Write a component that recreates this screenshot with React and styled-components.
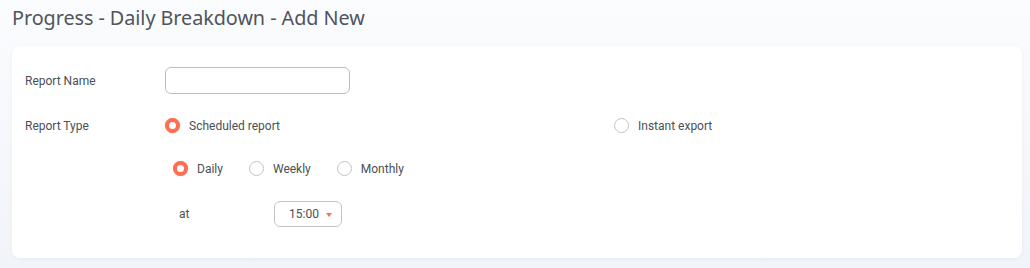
import styled, { createGlobalStyle } from 'styled-components';

const Global = createGlobalStyle`
html, body {
margin: 0;
padding: 0;
}
body {
background: linear-gradient(180deg, #fbfcfe 0%, #f1f4f9 100%);
min-height: 268px;
font-family: Roboto, "Liberation Sans", sans-serif;
color: #4b4f56;
}
`

const Page = styled.div`
padding: 0 8px 10px 12px;
`

const Title = styled.h1`
margin: 0;
height: 46px;
padding-top: 4px;
box-sizing: border-box;
font-family: "Noto Sans", "Open Sans", sans-serif;
font-weight: 400;
font-size: 19.8px;
letter-spacing: -0.05px;
color: #50545c;
line-height: 28px;
`

const Card = styled.div`
background: #fff;
border-radius: 8px;
box-shadow: 0 1px 4px rgba(120, 135, 160, 0.08);
padding: 21px 13px 31px 13px;
height: 212px;
box-sizing: border-box;
`

const Row = styled.div`
display: flex;
align-items: ${p => p.$align || 'center'};
margin-top: ${p => p.$top || 0}px;
`

const Label = styled.div`
width: 140px;
flex-shrink: 0;
font-size: 12px;
color: #4b4f56;
`

const TextInput = styled.input`
width: 185px;
height: 27px;
box-sizing: border-box;
border: 1px solid #bdbdbd;
border-radius: 6px;
outline: none;
padding: 0 10px;
font-family: inherit;
`

const Options = styled.div`
display: flex;
align-items: center;
`

const Option = styled.label`
display: flex;
align-items: center;
gap: 9px;
width: ${p => p.$width ? p.$width + 'px' : 'auto'};
margin-right: ${p => p.$mr || 0}px;
font-size: 12px;
color: #4b4f56;
cursor: pointer;
`

const Dot = styled.span`
width: 15px;
height: 15px;
box-sizing: border-box;
border-radius: 50%;
flex-shrink: 0;
${p => p.$on ? `
background: #fff;
border: 4.5px solid #ff6e52;
box-shadow: 0 0 1px rgba(255, 90, 70, 0.6);
` : `
background: #fff;
border: 1px solid #c4c4c4;
`}
`

const Sub = styled.div`
padding-left: 148px;
`

const AtLabel = styled.div`
width: 101px;
padding-left: 6px;
box-sizing: border-box;
font-size: 12px;
color: #4b4f56;
`

const Select = styled.div`
width: 68px;
height: 26px;
box-sizing: border-box;
border: 1px solid #c4c4c4;
border-radius: 6px;
display: flex;
align-items: center;
padding-left: 14px;
gap: 7px;
font-size: 12px;
color: #4b4f56;
`

const Caret = styled.span`
width: 0;
height: 0;
border-left: 3px solid transparent;
border-right: 3px solid transparent;
border-top: 4px solid #ff6e52;
margin-top: 1px;
`

const Radio = ({ on, children, width, mr }) => (
    <Option $width={width} $mr={mr}>
        <Dot $on={on} />
        {children}
    </Option>
)

const App = () => {
    return (
        <Page>
            <Global />
            <Title>Progress - Daily Breakdown - Add New</Title>
            <Card>
                <Row>
                    <Label>Report Name</Label>
                    <TextInput />
                </Row>
                <Row $top={24}>
                    <Label>Report Type</Label>
                    <Options>
                        <Radio on width={449}>Scheduled report</Radio>
                        <Radio>Instant export</Radio>
                    </Options>
                </Row>
                <Sub>
                    <Row $top={28}>
                        <Radio on mr={26}>Daily</Radio>
                        <Radio mr={26}>Weekly</Radio>
                        <Radio>Monthly</Radio>
                    </Row>
                    <Row $top={25}>
                        <AtLabel>at</AtLabel>
                        <Select>15:00 <Caret /></Select>
                    </Row>
                </Sub>
            </Card>
        </Page>
    )
}

export default App;
